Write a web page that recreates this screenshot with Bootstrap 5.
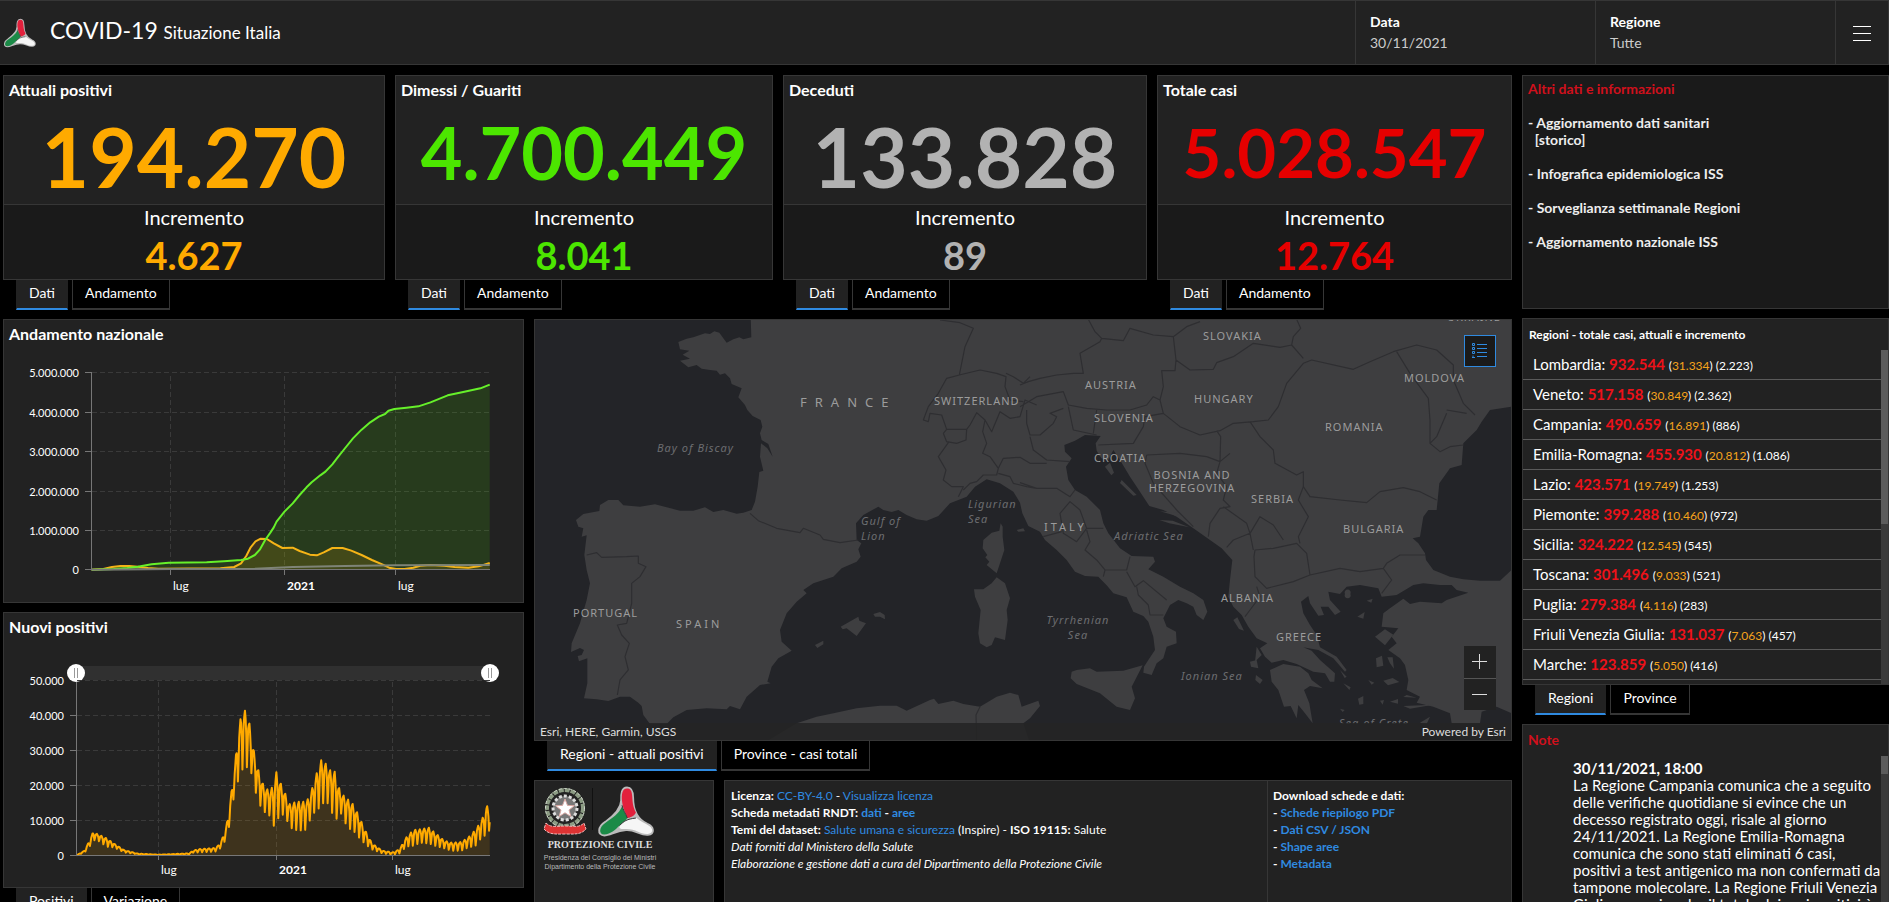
<!DOCTYPE html>
<html lang="it" data-bs-theme="dark">
<head>
<meta charset="utf-8">
<meta name="viewport" content="width=device-width, initial-scale=1">
<title>COVID-19 Situazione Italia</title>
<link href="https://cdn.jsdelivr.net/npm/bootstrap@5.3.0/dist/css/bootstrap.min.css" rel="stylesheet">
<style>
  :root { --line: #363636; --pane: #222; --pane-dark: #1a1a1a; --orange: #ffaa00; --green: #4ce600; --red: #e60000; --grey: #b2b2b2; --blue: #2f8ae0; }
  body { font-family: Lato, "Liberation Sans", sans-serif; font-size: 14px; line-height: 17px; background: #000; color: #fff; }
  a { color: inherit; text-decoration: none; }
  a.blue { color: var(--blue); }
  button { font: inherit; color: inherit; }
  .topbar { height: 65px; background: var(--pane); border: 1px solid var(--line); border-left: 0; flex: none; }
  .topbar h1 { font-size: 23px; line-height: 30px; font-weight: 400; margin: 0 0 0 14px; padding-bottom: 2px; }
  .topbar h1 span { font-size: 17px; }
  .topfilter { width: 240px; border: 0; border-left: 1px solid var(--line); background: none; padding: 9px 14px 11px; line-height: 21px; text-align: left; }
  .topfilter span { color: #ccc; }
  .topmenu { width: 53px; border: 0; border-left: 1px solid var(--line); background: none; padding: 0; }
  .board { display: grid; grid-template-columns: minmax(0,1509fr) minmax(0,367fr); gap: 10px; padding: 10px 0 0 3px; min-height: 0; }
  .stack { display: flex; flex-direction: column; gap: 9px; min-width: 0; min-height: 0; }
  .cards { display: grid; grid-template-columns: minmax(0,382fr) minmax(0,378fr) minmax(0,364fr) minmax(0,355fr); gap: 10px; }
  .lower { display: grid; grid-template-columns: minmax(0,521fr) minmax(0,978fr); gap: 10px; min-height: 0; }
  .pane { background: var(--pane); border: 1px solid var(--line); }
  .pane-dark { background: var(--pane-dark); }
  .pane h2 { font-size: 16px; line-height: 18px; font-weight: 700; margin: 0; padding: 5px 5px 1px; }
  .figure-top { height: 129px; border-bottom: 1px solid var(--line); }
  .figure-low { height: 74px; background: var(--pane-dark); text-align: center; }
  .figure-low .cap { font-size: 20px; line-height: 25px; }
  .figure-low .num { font-size: 38px; line-height: 50px; font-weight: 700; }
  .big { font-weight: 700; text-align: center; line-height: 104px; }
  .big-l { font-size: 82px; line-height: 112px; }
  .big-m { font-size: 72px; }
  .big-s { font-size: 67px; }
  .c-orange { color: var(--orange); } .c-green { color: var(--green); } .c-grey { color: var(--grey); } .c-red { color: var(--red); }
  .tabset { display: flex; gap: 4px; padding-left: 13px; height: 30px; flex: none; }
  .tabset button { background: #000; border: 1px solid var(--line); border-width: 0 1px 2px; padding: 0 12px 3px; white-space: nowrap; }
  .tabset button.on { background: var(--pane); border-color: var(--pane) var(--pane) var(--blue); }
  .plot { display: block; width: 100%; height: auto; overflow: visible; }
  .plot text { font-size: 12px; fill: #fff; }
  .plot g text { font-size: 11px; }
  .ax { stroke: #777; fill: none; }
  .gl { stroke: #3a3a3a; fill: none; stroke-dasharray: 5 3; }
  .curve { fill: none; stroke-width: 2; vector-effect: non-scaling-stroke; stroke-linejoin: round; }
  .scrub { display: grid; padding: 0 4.6% 0 12.1%; height: 18px; margin-top: 27px; }
  .scrub input { grid-area: 1 / 1; -webkit-appearance: none; appearance: none; width: 100%; height: 18px; margin: 0; background: none; pointer-events: none; }
  .scrub input:first-child { background: linear-gradient(#303030,#303030) center / calc(100% - 18px) 14px no-repeat; }
  .scrub input::-webkit-slider-thumb { -webkit-appearance: none; pointer-events: auto; width: 18px; height: 18px; border-radius: 50%; border: 0; background: linear-gradient(#999,#999) 7px 4px / 1px 10px no-repeat, linear-gradient(#999,#999) 10px 4px / 1px 10px no-repeat, #fff; }
  .mapbox { aspect-ratio: 978 / 422; position: relative; overflow: hidden; flex: none; }
  .mapbox > svg { display: block; width: 100%; height: 100%; }
  .bord { fill: none; stroke: #2e2e31; stroke-width: 3.5; stroke-linejoin: round; }
  .lbl { font-family: "Noto Sans", sans-serif; font-size: 11px; fill: #9c9c9c; letter-spacing: 1px; }
  .lbl-sea { font-style: italic; fill: #6c6d70; }
  .lbl-wide { letter-spacing: 3px; }
  .lbl-fr { font-size: 13px; letter-spacing: 8px; }
  .attrib { position: absolute; left: 0; right: 0; bottom: 0; height: 17px; padding: 0 5px; background: rgba(36,36,36,.88); color: #ddd; font-size: 12px; line-height: 17px; }
  .legend-btn { position: absolute; top: 15px; right: 15px; width: 32px; height: 32px; background: #1a1a1a; border: 1px solid var(--blue); padding: 0; }
  .zoomer { position: absolute; right: 15px; bottom: 30px; width: 32px; background: #222; }
  .zoomer button { display: block; width: 32px; height: 32px; padding: 0; border: 0; background: #222; }
  .zoomer button + button { border-top: 1px solid #555; }
  .zoomer svg, .legend-btn svg { display: block; margin: auto; }
  .foot { display: grid; grid-template-columns: minmax(0,180fr) minmax(0,788fr); gap: 10px; flex: 1 1 0; min-height: 122px; }
  .foot .pane { border-bottom: 0; }
  .foot-text { font-size: 12px; padding: 6px 6px; }
  .foot-text + .foot-text { border-left: 1px solid var(--line); padding: 6px 5px; width: 244px; flex: none; }
  .info { height: 234px; padding: 4px 5px 0; font-weight: 700; color: #eee; }
  .info ul, .foot ul { list-style: none; margin: 0; padding: 0; }
  .info li { margin-top: 17px; }
  .hot { color: #d0101c; font-weight: 700; }
  .regions { height: 367px; overflow: hidden; display: flex; flex-direction: column; flex: none; }
  .regions h3 { font-size: 12px; line-height: 17px; font-weight: 700; margin: 0; padding: 7px 6px; }
  .scroller { display: flex; flex: 1 1 0; min-height: 0; overflow: hidden; }
  .rows { list-style: none; margin: 0; padding: 0; flex: 1; }
  .rows li { height: 30px; border-bottom: 1px solid #5a5a5a; padding: 0 10px; line-height: 28px; font-size: 15px; white-space: nowrap; }
  .rows b { color: #ee1119; }
  .rows span { font-size: 12px; }
  .rows i { font-style: normal; color: #f5a31c; }
  .track { width: 7px; background: #3a3a3a; flex: none; }
  .track div { background: #5c5c5c; }
  .note { flex: 1 1 0; min-height: 0; overflow: hidden; border-bottom: 0; display: flex; flex-direction: column; }
  .note .hot { padding: 6px 5px 8px; }
  .note p { font-size: 15px; margin: 4px 0 0 43px; padding-left: 7px; flex: 1; }
</style>
</head>
<body class="vh-100 overflow-hidden d-flex flex-column">

<header class="topbar d-flex">
  <div class="d-flex align-items-center flex-grow-1 ps-1">
    <svg width="32" height="30" viewBox="0 0 170 150" aria-hidden="true"><use href="#trefoil"/></svg>
    <h1>COVID-19 <span>Situazione Italia</span></h1>
  </div>
  <button class="topfilter"><b>Data</b><br><span>30/11/2021</span></button>
  <button class="topfilter"><b>Regione</b><br><span>Tutte</span></button>
  <button class="topmenu" aria-label="Menu">
    <svg width="18" height="16" stroke="#fff"><path d="M0 .5h18M0 7.5h18M0 14.5h18"/></svg>
  </button>
</header>

<main class="board flex-grow-1">
  <div class="stack">
    <div class="cards">
      <section>
        <div class="pane"><div class="figure-top"><h2>Attuali positivi</h2><div class="big big-l c-orange">194.270</div></div>
          <div class="figure-low"><div class="cap">Incremento</div><div class="num c-orange">4.627</div></div></div>
        <div class="tabset"><button class="on">Dati</button><button>Andamento</button></div>
      </section>
      <section>
        <div class="pane"><div class="figure-top"><h2>Dimessi / Guariti</h2><div class="big big-m c-green">4.700.449</div></div>
          <div class="figure-low"><div class="cap">Incremento</div><div class="num c-green">8.041</div></div></div>
        <div class="tabset"><button class="on">Dati</button><button>Andamento</button></div>
      </section>
      <section>
        <div class="pane"><div class="figure-top"><h2>Deceduti</h2><div class="big big-l c-grey">133.828</div></div>
          <div class="figure-low"><div class="cap">Incremento</div><div class="num c-grey">89</div></div></div>
        <div class="tabset"><button class="on">Dati</button><button>Andamento</button></div>
      </section>
      <section>
        <div class="pane"><div class="figure-top"><h2>Totale casi</h2><div class="big big-s c-red">5.028.547</div></div>
          <div class="figure-low"><div class="cap">Incremento</div><div class="num c-red">12.764</div></div></div>
        <div class="tabset"><button class="on">Dati</button><button>Andamento</button></div>
      </section>
    </div>

    <div class="lower flex-grow-1">
      <div class="stack">
        <section class="pane flex-shrink-0">
          <h2>Andamento nazionale</h2>
          <svg class="plot" viewBox="4 344 519 258">
            <path class="gl" d="M92 372.500H490M92 412.500H490M92 451.500H490M92 491.500H490M92 530.500H490M170.500 376V570M284.500 376V570M395.500 376V570"/>
            <svg x="0" y="310" width="540" height="300" viewBox="0 0 1568 900" preserveAspectRatio="none">
              <path fill="#4ce600" fill-opacity=".13" d="M266 779L400 770 440 763 490 758 600 757 700 750 740 735 770 690 800 640 826 605 860 565 890 530 920 500 960 465 1000 418 1040 372 1075 337 1120 310 1140 298 1215 289 1250 277 1300 256 1345 246 1400 234 1422 224V780H266Z"/>
              <path fill="#ffaa00" fill-opacity=".13" d="M266 779L310 775 350 768 400 770 450 776 640 776 690 768 710 745 740 700 757 686 785 690 820 714 850 714 890 732 920 736 965 714 995 714 1050 735 1110 763 1145 776 1190 775 1240 765 1350 773 1422 759V780H266Z"/>
              <path class="curve" stroke="#f5b417" d="M266 779L300 777 325 771 350 768 375 768 400 770 430 774 460 776 640 775 680 771 700 760 715 738 728 712 742 694 757 686 775 687 795 700 820 714 850 713 870 723 900 734 920 736 940 727 965 714 995 714 1020 722 1050 735 1080 750 1110 763 1130 773 1150 777 1175 777 1200 773 1220 767 1250 765 1290 767 1320 771 1360 773 1390 769 1422 759"/>
              <path class="curve" stroke="#66f02a" d="M266 779L330 777 370 774 400 770 440 763 490 758 600 757 650 754 700 750 720 746 740 735 755 718 770 690 785 668 795 652 803 635 826 605 850 580 870 555 890 532 905 517 930 496 945 485 965 463 980 443 1000 417 1025 385 1050 359 1075 337 1100 320 1118 312 1128 302 1145 297 1180 293 1215 289 1250 277 1300 256 1345 246 1395 235 1422 224"/>
              <path class="curve" stroke="#7f8477" d="M266 779L500 777 740 776 850 771 1000 768 1150 766 1422 765"/>
            </svg>
            <path class="ax" d="M91.500 372V570M85 372.500h6M85 412.500h6M85 451.500h6M85 491.500h6M85 530.500h6M85 569.500H490M170.500 570v5M284.500 570v5M395.500 570v5"/>
            <g text-anchor="end"><text x="79" y="377">5.000.000</text><text x="79" y="417">4.000.000</text><text x="79" y="456">3.000.000</text><text x="79" y="496">2.000.000</text><text x="79" y="535">1.000.000</text><text x="79" y="574">0</text></g>
            <text x="173" y="590">lug</text><text x="287" y="590" font-weight="700">2021</text><text x="398" y="590">lug</text>
          </svg>
        </section>
        <section class="flex-shrink-0">
          <div class="pane">
            <h2>Nuovi positivi</h2>
            <div class="scrub">
              <input type="range" min="0" max="645" value="0" aria-label="Data iniziale">
              <input type="range" min="0" max="645" value="645" aria-label="Data finale">
            </div>
            <svg class="plot" viewBox="4 682 519 205">
              <path class="gl" d="M77 680.500H490M77 715.500H490M77 750.500H490M77 785.500H490M77 820.500H490M158.500 682V855M276.500 682V855M392.500 682V855"/>
              <svg x="0" y="600" width="540" height="302" viewBox="0 0 1568 906" preserveAspectRatio="none">
                <path id="dailyFill" fill="#ffaa00" fill-opacity=".13"/>
                <path id="daily" class="curve" stroke="#ffaa00"/>
              </svg>
              <path class="ax" d="M76.500 682V856M70 715.500h6M70 750.500h6M70 785.500h6M70 820.500h6M70 855.500H490M158.500 856v4M276.500 856v4M392.500 856v4"/>
              <g text-anchor="end"><text x="64" y="685">50.000</text><text x="64" y="720">40.000</text><text x="64" y="755">30.000</text><text x="64" y="790">20.000</text><text x="64" y="825">10.000</text><text x="64" y="860">0</text></g>
              <text x="161" y="874">lug</text><text x="279" y="874" font-weight="700">2021</text><text x="395" y="874">lug</text>
            </svg>
          </div>
          <div class="tabset"><button class="on">Positivi</button><button>Variazione</button></div>
        </section>
      </div>

      <div class="stack">
        <section class="flex-shrink-0">
          <div class="pane mapbox">
            <svg viewBox="535 320 976 420" preserveAspectRatio="xMidYMid slice" role="img" aria-label="Mappa delle regioni">
              <rect x="535" y="320" width="976" height="420" fill="#232428"/>
              <g transform="translate(530 310) scale(.33333)">
                <g fill="#3e3e40">
                  <path d="M662 20L664 82 640 88 628 82 610 88 590 98 580 85 568 68 553 64 540 72 525 70 490 82 470 86 445 96 450 118 478 122 458 134 480 146 450 152 475 172 500 165 515 176 540 180 560 182 570 194 585 190 600 205 605 222 635 235 625 262 645 285 652 300 668 318 692 330 697 350 690 370 695 390 715 402 728 440 712 415 693 400 690 440 700 482 688 486 683 530 675 575 665 600 640 608 620 611 580 600 550 606 525 592 490 602 450 602 410 592 375 583 330 590 280 586 265 570 235 570 210 585 208 603 160 612 138 630 145 650 160 655 155 680 170 676 163 735 170 780 180 820 170 870 150 940 125 1000 123 1026 150 1014 162 1020 155 1035 143 1038 147 1054 172 1045 172 1120 162 1165 200 1168 235 1173 270 1160 300 1160 325 1178 335 1188 340 1215 360 1242 410 1242 430 1222 470 1200 530 1195 590 1198 600 1188 630 1198 650 1160 690 1125 722 1120 712 1115 725 1070 745 1045 785 1022 755 995 750 960 770 910 800 875 830 850 820 840 850 820 910 800 935 775 980 755 992 740 985 718 994 700 980 690 978 640 1000 615 1045 590 1060 600 1085 606 1105 600 1130 615 1160 628 1190 632 1225 618 1260 580 1310 560 1335 530 1370 508 1410 520 1450 545 1470 578 1477 610 1495 648 1530 665 1545 690 1580 720 1610 750 1635 785 1665 798 1705 800 1732 828 1750 850 1790 862 1810 905 1840 918 1855 935 1870 980 1875 1020 1855 1050 1842 1070 1840 1088 1865 1095 1880 1060 1900 1045 1910 1010 1940 1000 1938 965 1910 950 1900 925 1920 885 1945 870 1970 880 1990 890 2000 915 2020 930 2032 905 2020 870 1990 850 1950 830 1900 800 1855 778 1875 755 1870 740 1805 738 1770 715 1735 670 1720 640 1710 600 1670 560 1635 540 1615 510 1608 470 1625 445 1605 425 1603 405 1635 392 1665 375 1712 378 1697 400 1700 422 1714 445 1735 450 1750 420 1770 450 1800 500 1820 530 1858 588 1900 600 1940 620 1990 655 2040 690 2075 715 2107 750 2100 810 2095 860 2110 890 2135 915 2155 950 2180 985 2212 1000 2190 1015 2205 1040 2225 1058 2260 1050 2300 1062 2350 1085 2385 1090 2400 1115 2413 1115 2415 1090 2370 1050 2345 1022 2320 1012 2365 1020 2410 1045 2445 1085 2450 1080 2420 1040 2370 1012 2360 975 2340 945 2320 910 2313 875 2335 858 2340 880 2365 917 2382 915 2372 890 2395 890 2415 915 2432 905 2400 870 2395 845 2430 852 2450 830 2490 825 2545 835 2555 860 2600 855 2650 825 2680 820 2730 825 2765 825 2780 840 2815 848 2750 870 2735 880 2670 875 2640 882 2620 866 2580 895 2560 910 2555 950 2605 955 2585 980 2600 1000 2575 1020 2610 1045 2625 1065 2635 1110 2630 1140 2670 1160 2660 1178 2710 1190 2760 1210 2765 1240 2850 1240 2855 1205 2900 1190 2945 1210 2945 780 2910 812 2850 812 2800 808 2760 800 2710 780 2688 750 2685 730 2665 700 2648 685 2670 680 2680 620 2695 600 2720 600 2728 520 2760 475 2795 465 2800 400 2840 360 2855 335 2880 300 2945 290V20Z"/>
                  <path d="M700 1300L800 1240 860 1220 900 1212 980 1195 1050 1187 1100 1187 1130 1202 1200 1170 1212 1166 1225 1182 1270 1172 1300 1182 1350 1190 1400 1160 1440 1148 1465 1155 1475 1190 1525 1172 1530 1188 1500 1225 1480 1240 1500 1300Z"/>
                  <path d="M1412 640L1418 650 1418 680 1423 720 1410 760 1400 790 1370 765 1378 755 1366 742 1372 735 1358 715 1360 690 1385 668 1408 662Z"/>
                  <path d="M1332 838L1360 838 1385 820 1400 802 1425 820 1440 865 1430 900 1433 930 1425 990 1395 982 1385 1005 1370 1012 1350 1000 1345 970 1352 900 1335 860Z"/>
                  <path d="M932 950L985 920 988 932 1008 940 980 978 950 955 938 958ZM1030 912L1050 906 1064 915 1065 928 1050 920 1035 920ZM855 1005L880 992 880 1003 862 1014ZM1460 660L1480 655 1485 664 1465 665Z"/>
                  <path d="M1625 1085L1640 1080 1680 1075 1700 1085 1780 1082 1838 1066 1805 1130 1815 1165 1800 1200 1760 1190 1710 1150 1640 1122 1622 1105Z"/>
                  <path d="M2220 1080L2260 1062 2310 1070 2335 1090 2345 1110 2378 1135 2340 1128 2322 1140 2338 1180 2348 1240 2325 1210 2305 1185 2300 1225 2282 1188 2262 1190 2245 1140 2225 1115ZM2180 1010l15 25-20 20ZM2160 1055l20-5 5 25-22-5ZM2178 1095l20 15-8 12-14-12ZM2110 930l12-8 20 40-15-5Z"/>
                  <path d="M1725 470l15-12 12 30-8 8ZM1890 604l60 6-10 8ZM1888 630l40 2 50 20-60-12ZM1775 510l45 45-10 2-40-38ZM2445 852a9 9 0 1 1 16 0 9 9 0 1 1-16 0M2482 920l22-14-4 20ZM2510 872l18-6-4 12ZM2535 980l30-22 25 16-25 32ZM2538 1045l18-8 4 30-20 5ZM2572 1042l16 0 4 34-12-16ZM2440 1120l22 12-4 8ZM2484 1166l16-8 0 24-12 2ZM2515 1110l18 8-8 6ZM2560 1112l28-8 20 12-34 10ZM2580 1175l24-8 0 14ZM2550 1172l12-2-4 14ZM2430 1196l14 4-6 6ZM2630 1155l30 8-40-2ZM2620 1188l90-4-70 12ZM2670 1238l30-18-10 22ZM2430 1080l20 20-6 4Z"/>
                </g>
                <path class="bord" d="M660 610L685 632 740 655 810 668 820 655 870 675 880 688 930 698 985 690M170 735L200 728 215 742 290 740 325 738 325 760 348 770 330 800 305 820 305 880 290 940 262 945 275 975 298 1000 285 1040 295 1080 270 1110 262 1155M1230 30L1290 38 1330 55 1305 110 1288 195 1250 205 1225 250 1195 290 1180 330 1195 335 1200 310 1235 315 1250 358M1288 195L1350 180 1400 190 1428 200 1425 230 1440 270 1480 275M1428 190L1450 200 1480 220 1500 200M1340 1290L1338 1215 1350 1190M1240 370L1250 358 1310 358 1320 345 1340 308 1365 330 1385 365 1410 305 1440 325 1470 320 1485 270 1520 285M1240 370L1250 395 1280 400 1308 390 1310 358M1255 398L1225 440 1248 480 1240 510 1265 530 1300 530 1285 560M1365 330L1358 365 1370 400 1358 430 1380 440 1405 475 1400 495 1360 495 1340 515 1320 520 1300 540M1405 475L1420 445 1470 442 1500 460 1550 460M1405 490L1440 500 1450 520 1490 530 1520 535M1675 28L1695 65 1715 85 1710 95 1650 130 1655 160 1660 190 1630 190 1580 195 1530 205 1495 215 1470 225M1715 85L1780 92 1800 55 1870 75 1930 80 1938 150 1980 180 2050 178 2060 158 2110 140 2170 100 2250 112 2285 105 2290 80 2312 55 2300 28M1930 80L1970 50 2010 35M1938 150L1935 182 1895 182 1900 230 1890 270 1900 310 1950 350 2010 375 2070 362 2110 340 2170 335 2215 330 2245 290 2270 220 2320 160 2345 150 2470 178 2520 155 2590 125 2660 105 2720 120 2770 165 2770 210 2800 280 2835 315M2285 105L2320 145M2600 125L2640 190 2695 265 2700 330 2700 400 2730 425 2760 410 2800 405M2750 300L2810 310M2750 310L2720 380 2700 400M1470 290L1520 260 1600 245 1615 285 1670 295 1730 300 1800 300 1850 285 1870 260 1890 270M1700 300L1690 370M1705 405L1810 400 1840 350 1845 320 1900 310M1850 435L1950 430 2030 440 2070 455 2072 380 2060 362M2070 455L2100 430M2070 455L2060 490 2090 530 2080 570 2100 590 2070 595 2040 640 2035 680M1850 435L1845 460 1870 520 1940 600 1990 650M2160 335L2190 380 2230 420 2235 460 2300 495 2320 485 2320 530 2340 560 2430 570 2510 578 2550 545 2620 533 2670 545 2720 570M2320 530L2305 570 2335 620 2305 680 2310 700M2080 590L2150 640 2160 670 2110 690 2090 712M2160 670L2190 620 2230 645 2260 690M2175 720L2230 715 2300 700 2330 730 2340 795 2290 815 2210 835 2175 800 2172 740ZM2160 670L2170 720M2180 830L2190 860 2160 900 2145 920M2340 795L2430 775 2490 785 2560 775 2570 760 2610 735 2685 735M2560 775L2585 810 2555 850M1470 518L1520 535 1580 535 1620 560 1635 540M1490 300L1490 340 1500 375 1530 375 1570 340 1580 320 1560 310 1600 295M1500 380L1510 420 1550 450 1620 455M1615 290L1630 360 1700 375M1590 610L1620 575 1650 600 1670 655 1640 695 1600 670ZM1540 680L1595 665M1670 655L1720 655M1670 660L1680 695 1665 720 1700 750 1725 780 1790 780 1800 740M1725 780L1720 800M1790 785L1815 830 1840 812 1910 870M1820 830L1825 855 1855 885 1860 915 1900 915"/>
              </g>
              <svg x="535" y="320" width="976" height="404" viewBox="535 320 976 404">
                <g class="lbl">
                  <text x="800" y="407" class="lbl-fr">FRANCE</text>
                  <text x="934" y="405">SWITZERLAND</text><text x="573" y="617">PORTUGAL</text><text x="676" y="628" class="lbl-wide">SPAIN</text>
                  <text x="1203" y="340">SLOVAKIA</text><text x="1085" y="389">AUSTRIA</text><text x="1194" y="403">HUNGARY</text><text x="1404" y="382">MOLDOVA</text>
                  <text x="1094" y="422">SLOVENIA</text><text x="1325" y="431">ROMANIA</text><text x="1094" y="462">CROATIA</text>
                  <text x="1192" y="479" text-anchor="middle">BOSNIA AND</text><text x="1192" y="492" text-anchor="middle">HERZEGOVINA</text>
                  <text x="1251" y="503">SERBIA</text><text x="1343" y="533">BULGARIA</text><text x="1044" y="531" class="lbl-wide">ITALY</text>
                  <text x="1221" y="602">ALBANIA</text><text x="1276" y="641">GREECE</text><text x="1447" y="321">UKRAINE</text>
                </g>
                <g class="lbl lbl-sea">
                  <text x="657" y="452">Bay of Biscay</text><text x="861" y="525">Gulf of</text><text x="861" y="540">Lion</text>
                  <text x="968" y="508">Ligurian</text><text x="968" y="523">Sea</text><text x="1114" y="540">Adriatic Sea</text>
                  <text x="1078" y="624" text-anchor="middle">Tyrrhenian</text><text x="1078" y="639" text-anchor="middle">Sea</text>
                  <text x="1181" y="680">Ionian Sea</text><text x="1339" y="727">Sea of Crete</text>
                </g>
              </svg>
            </svg>
            <button class="legend-btn" aria-label="Legenda"><svg width="16" height="16" fill="none" stroke="#2f8ae0"><path d="M5 1.500h10M5 5.500h10M5 9.500h10M5 13.500h10M.5.5h2v2h-2zM.5 4.500h2v2h-2zM.5 8.500h2v2h-2zM1 12.500v2M0 14.500h3"/></svg></button>
            <div class="zoomer">
              <button aria-label="Zoom avanti"><svg width="16" height="16" stroke="#ddd"><path d="M0 7.500h15M7.500 0v15"/></svg></button>
              <button aria-label="Zoom indietro"><svg width="16" height="16" stroke="#ddd"><path d="M0 7.500h15"/></svg></button>
            </div>
            <div class="attrib d-flex justify-content-between"><span>Esri, HERE, Garmin, USGS</span><span>Powered by Esri</span></div>
          </div>
          <div class="tabset"><button class="on">Regioni - attuali positivi</button><button>Province - casi totali</button></div>
        </section>

        <div class="foot">
          <section class="pane">
            <svg class="d-block" width="130" height="96" viewBox="535 781 130 96" role="img" aria-label="Protezione Civile">
              <defs>
                <g id="trefoil" stroke-width="5">
                  <path stroke="#bbb" fill="#bbb" stroke-width="9" stroke-linejoin="round" d="M87 4C72 4 70 22 71 42 70 68 50 88 22 108 0 122-2 146 18 146 36 146 52 132 84 130 112 128 128 146 150 144 170 142 168 122 148 114 118 100 104 70 104 34 104 14 100 4 87 4Z"/>
                  <path fill="#e2203c" d="M87 5C72 5 70 24 72 44 74 66 84 80 88 95 104 92 112 84 114 78 104 58 104 44 103 30 102 12 98 5 87 5Z"/>
                  <path fill="#1b8a47" d="M72 60C62 82 44 94 22 109 2 122 0 144 18 145 38 144 52 130 62 120 74 108 84 102 88 95 82 82 76 72 72 60Z"/>
                  <path fill="#f6f6f6" d="M66 117C78 106 88 96 116 95 128 106 140 110 150 116 168 124 168 142 150 143 126 144 116 128 84 128 68 128 60 130 66 117Z"/>
                  <path fill="none" stroke="#333" stroke-width="3" d="M64 118C78 104 86 98 114 95M88 95C84 82 74 70 72 56"/>
                </g>
              </defs>
              <g fill="none" stroke="#cfd5cb"><circle cx="565" cy="808" r="18" stroke="#8c9c84" stroke-width="4" stroke-dasharray="5 1"/><circle cx="565" cy="808" r="19.500" stroke-dasharray="3 2"/></g>
              <circle cx="565" cy="808" r="12" fill="#777" stroke="#ddd" stroke-width="3" stroke-dasharray="3 2"/>
              <path fill="#fff" stroke="#dba9a4" d="M565 799l2.500 6.400 6.900.3-5.400 4.300 1.900 6.600-5.900-3.800-5.900 3.800 1.900-6.600-5.400-4.300 6.900-.3z"/>
              <path fill="#d33" stroke="#eebbbb" stroke-dasharray="3 1" d="M546 823c5 5 10 3 19 3s14 2 19-3l2 6c-5 6-12 5-21 5s-16 1-21-5z"/>
              <path stroke="#111" d="M592.500 788v42"/>
              <svg x="597" y="786" width="58" height="51" viewBox="-4 -2 176 154"><use href="#trefoil"/></svg>
              <text x="600" y="848" text-anchor="middle" fill="#ddd" font-family="Liberation Serif, serif" font-size="10" font-weight="700">PROTEZIONE CIVILE</text>
              <g fill="#bbb" text-anchor="middle" font-family="Liberation Sans Narrow, Liberation Sans, sans-serif" font-size="7"><text x="600" y="860">Presidenza del Consiglio dei Ministri</text><text x="600" y="869">Dipartimento della Protezione Civile</text></g>
            </svg>
          </section>
          <section class="pane d-flex">
            <div class="foot-text flex-grow-1">
              <b>Licenza:</b> <a class="blue" href="#">CC-BY-4.0</a> - <a class="blue" href="#">Visualizza licenza</a><br>
              <b>Scheda metadati RNDT: <a class="blue" href="#">dati</a> - <a class="blue" href="#">aree</a></b><br>
              <b>Temi del dataset:</b> <a class="blue" href="#">Salute umana e sicurezza</a> (Inspire) - <b>ISO 19115:</b> Salute<br>
              <em>Dati forniti dal Ministero della Salute<br>Elaborazione e gestione dati a cura del Dipartimento della Protezione Civile</em>
            </div>
            <div class="foot-text fw-bold">Download schede e dati:
              <ul><li>- <a class="blue" href="#">Schede riepilogo PDF</a></li><li>- <a class="blue" href="#">Dati CSV / JSON</a></li><li>- <a class="blue" href="#">Shape aree</a></li><li>- <a class="blue" href="#">Metadata</a></li></ul>
            </div>
          </section>
        </div>
      </div>
    </div>
  </div>

  <aside class="stack">
    <section class="pane pane-dark info flex-shrink-0">
      <div class="hot">Altri dati e informazioni</div>
      <ul>
        <li>- <a href="#">Aggiornamento dati sanitari<br>&nbsp; [storico]</a></li>
        <li>- <a href="#">Infografica epidemiologica ISS</a></li>
        <li>- <a href="#">Sorveglianza settimanale Regioni</a></li>
        <li>- <a href="#">Aggiornamento nazionale ISS</a></li>
      </ul>
    </section>
    <section class="flex-shrink-0">
      <div class="pane regions">
        <h3>Regioni - totale casi, attuali e incremento</h3>
        <div class="scroller">
          <ul class="rows">
            <li>Lombardia: <b>932.544</b> <span>(<i>31.334</i>) (2.223)</span></li>
            <li>Veneto: <b>517.158</b> <span>(<i>30.849</i>) (2.362)</span></li>
            <li>Campania: <b>490.659</b> <span>(<i>16.891</i>) (886)</span></li>
            <li>Emilia-Romagna: <b>455.930</b> <span>(<i>20.812</i>) (1.086)</span></li>
            <li>Lazio: <b>423.571</b> <span>(<i>19.749</i>) (1.253)</span></li>
            <li>Piemonte: <b>399.288</b> <span>(<i>10.460</i>) (972)</span></li>
            <li>Sicilia: <b>324.222</b> <span>(<i>12.545</i>) (545)</span></li>
            <li>Toscana: <b>301.496</b> <span>(<i>9.033</i>) (521)</span></li>
            <li>Puglia: <b>279.384</b> <span>(<i>4.116</i>) (283)</span></li>
            <li>Friuli Venezia Giulia: <b>131.037</b> <span>(<i>7.063</i>) (457)</span></li>
            <li>Marche: <b>123.859</b> <span>(<i>5.050</i>) (416)</span></li>
          </ul>
          <div class="track"><div style="height:52%"></div></div>
        </div>
      </div>
      <div class="tabset"><button class="on">Regioni</button><button>Province</button></div>
    </section>
    <section class="pane note">
      <div class="hot">Note</div>
      <div class="scroller">
        <p><b>30/11/2021, 18:00</b><br>La Regione Campania comunica che a seguito delle verifiche quotidiane si evince che un decesso registrato oggi, risale al giorno 24/11/2021. La Regione Emilia-Romagna comunica che sono stati eliminati 6 casi, positivi a test antigenico ma non confermati da tampone molecolare. La Regione Friuli Venezia Giulia comunica che il totale dei casi positivi è</p>
        <div class="track"><div style="height:12%"></div></div>
      </div>
    </section>
  </aside>
</main>

<script src="https://cdn.jsdelivr.net/npm/bootstrap@5.3.0/dist/js/bootstrap.bundle.min.js"></script>
<script>
  // Weekly peak and trough of the daily cases: [x, peak y, trough y]
  const env = [[222,766,766],[245,752,758],[260,722,740],[270,697,720],[285,703,722],[310,715,740],[330,730,742],[360,750,757],[400,761,763],[460,764,765],[550,760,764],[560,752,758],[580,747,757],[625,744,755],[640,730,745],[655,690,720],[665,635,680],[674,560,630],[680,525,580],[688,432,555],[700,345,510],[713,330,505],[725,373,495],[738,458,560],[750,510,605],[765,556,635],[780,572,640],[793,560,680],[803,514,665],[815,550,640],[830,585,650],[840,613,682],[860,605,690],[885,605,692],[900,592,660],[910,550,640],[922,512,630],[933,480,615],[948,493,600],[960,513,635],[972,515,645],[980,550,662],[990,580,640],[1010,598,685],[1025,613,690],[1040,643,710],[1060,690,732],[1080,730,748],[1110,752,760],[1140,757,764],[1160,748,760],[1180,712,740],[1200,690,737],[1220,688,728],[1245,683,730],[1265,700,738],[1290,722,745],[1310,728,752],[1340,726,752],[1360,712,742],[1380,690,738],[1395,668,717],[1405,645,710],[1413,618,700],[1422,622,690]];
  const week = [0, .35, .8, .92, 1, .85, .6];
  const pts = [];
  for (let d = 0; d <= 645; d++) {
    const x = 222 + d * 1200 / 645;
    let k = env.findIndex(e => e[0] > x); if (k < 1) k = env.length - 1;
    const a = env[k - 1], b = env[k], t = (x - a[0]) / (b[0] - a[0]);
    const hi = a[1] + (b[1] - a[1]) * t, lo = a[2] + (b[2] - a[2]) * t;
    pts.push(x.toFixed(1) + ' ' + (lo + (hi - lo) * week[d % 7]).toFixed(1));
  }
  document.getElementById('daily').setAttribute('d', 'M' + pts.join('L'));
  document.getElementById('dailyFill').setAttribute('d', 'M' + pts.join('L') + 'V766H222Z');
</script>
</body>
</html>
